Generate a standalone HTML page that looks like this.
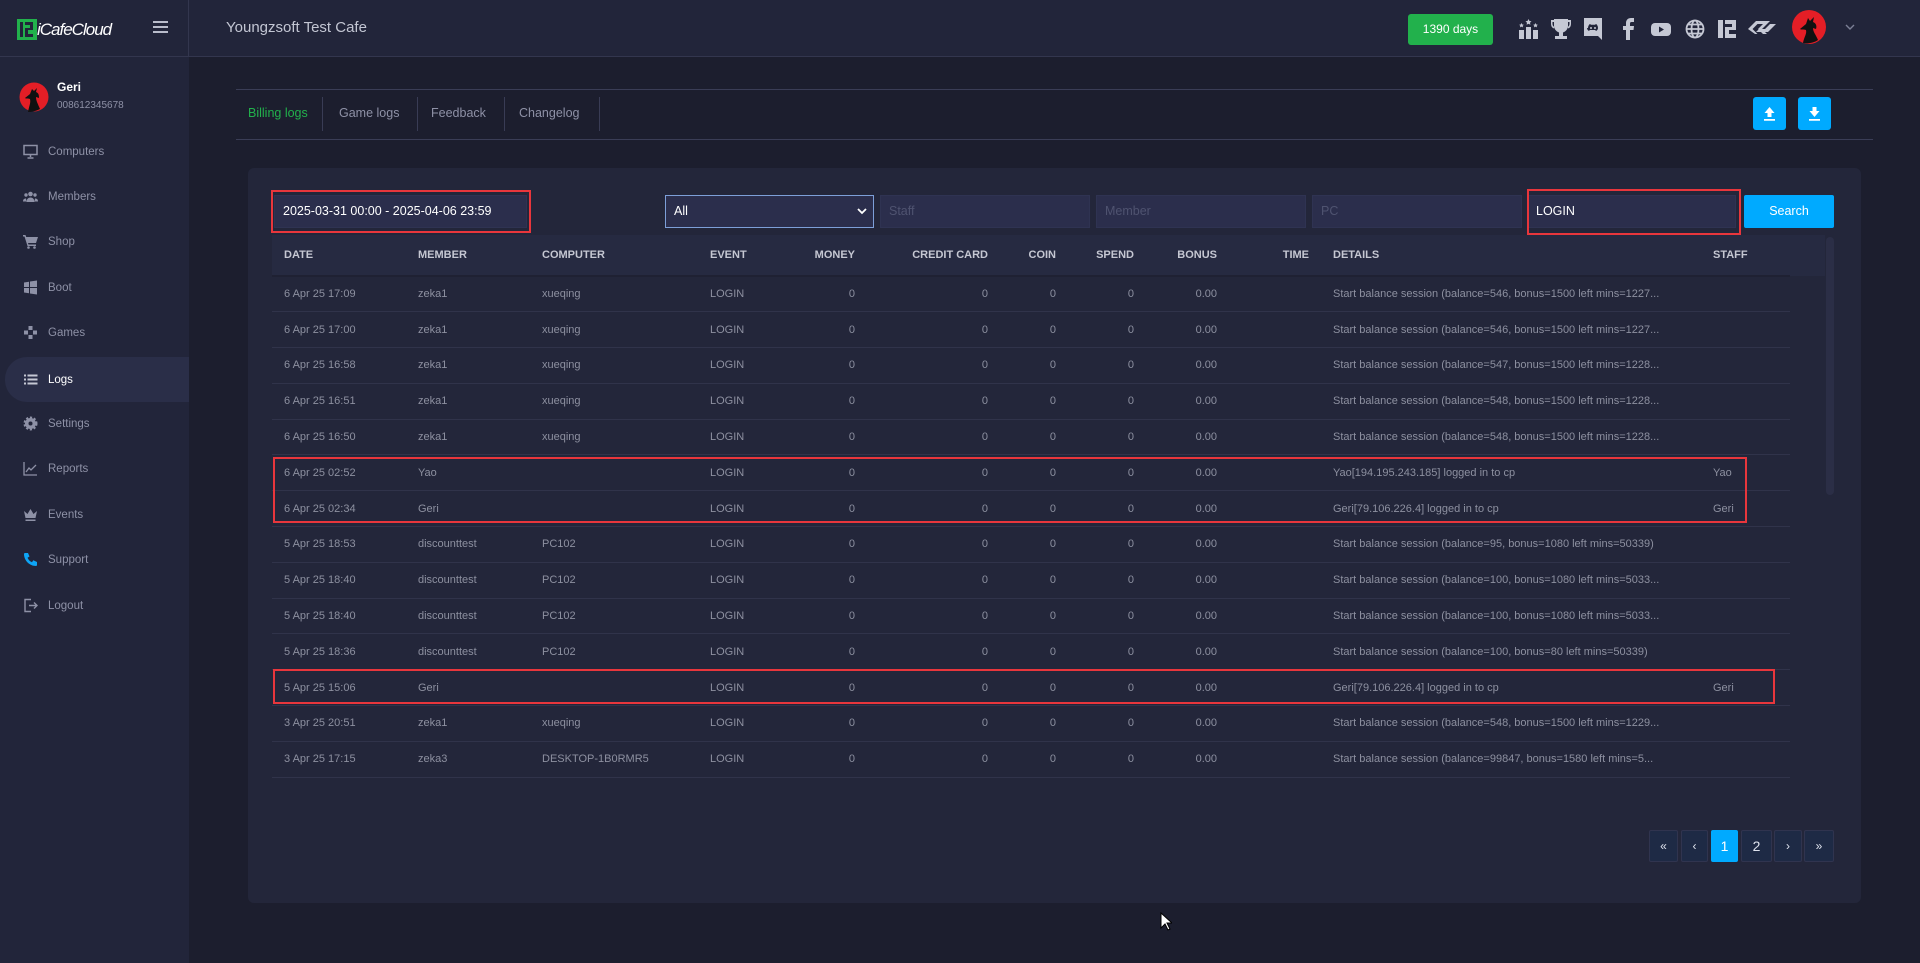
<!DOCTYPE html>
<html><head><meta charset="utf-8"><style>
*{box-sizing:border-box;margin:0;padding:0}
body{width:1920px;height:963px;background:#1c1e2e;font-family:"Liberation Sans",sans-serif;position:relative;overflow:hidden;color:#8d90a0}
.abs{position:absolute}
#hdr{left:0;top:0;width:1920px;height:57px;background:#22253a;border-bottom:1px solid #33364e}
#side{left:0;top:57px;width:189px;height:906px;background:#22253a}
.nav{position:absolute;left:0;width:189px;height:45px;display:flex;align-items:center;font-size:11.5px;color:#8e91a6}
.nav svg{position:absolute;left:23px}
.nav span{position:absolute;left:48px}
.tab{position:absolute;top:106px;font-size:12.5px;color:#8e91a6}
.sep{position:absolute;top:97px;width:1px;height:34px;background:#393c55}
.inp{position:absolute;top:195px;height:33px;background:#2b2e4c;border:1px solid #2f3352;font-size:12.5px;color:#4f5370;padding:0 8px;line-height:31px}
table{position:absolute;left:272px;top:235px;width:1518px;border-collapse:collapse;table-layout:fixed;font-size:11px}
th{height:41px;text-align:left;font-size:11px;color:#c5c7d2;font-weight:bold;padding:0 12px;border-bottom:2px solid #1f2133}
td{height:35.8px;padding:0 12px;color:#8d90a0;border-bottom:1px solid #30334a;white-space:nowrap;overflow:hidden;text-overflow:ellipsis}
.r{text-align:right}
.red{position:absolute;border:2px solid #e8363c}
.pg{position:absolute;top:830px;height:32px;background:#1e2a45;border:1px solid #30344f;border-radius:2px;color:#dfe3ee;font-size:12px;display:flex;align-items:center;justify-content:center}
.ic{position:absolute;top:17px}
</style></head><body>
<div id="hdr" class="abs"></div>
<div class="abs" style="left:188px;top:0;width:1px;height:57px;background:#33364e"></div>
<svg class="abs" style="left:17px;top:19px" width="20" height="21" viewBox="0 0 20 21"><rect width="20" height="21" fill="#22b14c"/><rect x="3" y="3" width="3" height="15" fill="#22253a"/><path d="M8 3h8v8h-5v4h5v3h-8v-9h5v-3h-5z" fill="#22253a"/></svg>
<div class="abs" style="left:37px;top:20px;font-size:17px;color:#fff;letter-spacing:-1px;font-style:italic">iCafeCloud</div>
<div class="abs" style="left:153px;top:21px;width:15px;height:2px;background:#b9bccb;box-shadow:0 5px 0 #b9bccb,0 10px 0 #b9bccb"></div>
<div class="abs" style="left:226px;top:19px;font-size:15px;color:#c3c6d3">Youngzsoft Test Cafe</div>
<div class="abs" style="left:1408px;top:14px;width:85px;height:31px;background:#22b14c;border-radius:3px;color:#fff;font-size:12px;text-align:center;line-height:31px">1390 days</div>
<svg class="ic" style="left:1517px" width="24" height="24" viewBox="0 0 24 24" fill="#c5c8d4"><rect x="2" y="13" width="5" height="9"/><rect x="9" y="10" width="5" height="12"/><rect x="16" y="13" width="5" height="9"/><path d="M11.5 2l1 2 2 .3-1.5 1.4.4 2-1.9-1-1.9 1 .4-2L8.5 4.3l2-.3zM4.5 6l.8 1.5 1.6.2-1.2 1.1.3 1.6-1.5-.8-1.5.8.3-1.6L2.1 7.7l1.6-.2zM18.5 6l.8 1.5 1.6.2-1.2 1.1.3 1.6-1.5-.8-1.5.8.3-1.6-1.2-1.1 1.6-.2z"/></svg>
<svg class="ic" style="left:1550px" width="22" height="24" viewBox="0 0 22 24" fill="#c5c8d4"><path d="M4 2h14v7a7 7 0 0 1-5 6.5V19h4v3H5v-3h4v-3.5A7 7 0 0 1 4 9zM1 3h3v2H2.5v2c0 1.5 1 2.5 1.8 3l-.6 1.5C2 10.7 1 9 1 7zM21 3h-3v2h1.5v2c0 1.5-1 2.5-1.8 3l.6 1.5C20 10.7 21 9 21 7z"/></svg>
<svg class="ic" style="left:1582px" width="22" height="24" viewBox="0 0 22 24"><path d="M2 1h18v22l-4-4H2z" fill="#c5c8d4"/><path d="M6 11c0-2 1-3.5 2-4l1 .8h4l1-.8c1 .5 2 2 2 4 0 1.5-1 2.5-2 3l-.8-1h-5.4l-.8 1c-1-.5-2-1.5-2-3z" fill="#22253a"/><circle cx="9" cy="11" r="1" fill="#c5c8d4"/><circle cx="13" cy="11" r="1" fill="#c5c8d4"/></svg>
<svg class="ic" style="left:1622px" width="14" height="24" viewBox="0 0 14 24" fill="#c5c8d4"><path d="M4 23V13H1V9h3V6c0-3 2-5 5-5h3v4H9.5C8.5 5 8 5.5 8 6.5V9h4l-.5 4H8v10z"/></svg>
<svg class="ic" style="left:1650px" width="22" height="24" viewBox="0 0 22 24"><rect x="1" y="6" width="20" height="13" rx="4" fill="#c5c8d4"/><path d="M9 9.5v6l5-3z" fill="#22253a"/></svg>
<svg class="ic" style="left:1684px" width="22" height="24" viewBox="0 0 22 24" fill="none" stroke="#c5c8d4" stroke-width="1.8"><circle cx="11" cy="12" r="8.5"/><ellipse cx="11" cy="12" rx="3.5" ry="8.5"/><path d="M2.5 12h17M4 7.5h14M4 16.5h14"/></svg>
<svg class="ic" style="left:1716px" width="22" height="24" viewBox="0 0 22 24" fill="#c5c8d4"><path d="M2 3h5v18H2zM9 3h11v10h-7v4h7v4H9v-11h7V7H9z"/></svg>
<svg class="ic" style="left:1747px" width="30" height="24" viewBox="0 0 30 24" fill="#c5c8d4"><path d="M1 12l8-8h14l-3 3H10.5l-5 5 5 5H8zM11 12l5-5h4l-5 5 5 5h-4zM18 12l5-5h6l-8 8H9l3-3z"/></svg>
<svg class="abs" style="left:1791px;top:9px" width="36" height="36" viewBox="0 0 36 36"><circle cx="18" cy="18" r="17" fill="#e41e26"/><path d="M12 34c1-6 4-9 3-13-2-1-5 0-6-1l6-5 2-6 2 3 4-4-1 5c3 1 4 4 3 7l-3-1c0 4 3 7 5 12-4 3-11 4-15 3z" fill="#111"/></svg>
<svg class="abs" style="left:1845px;top:24px" width="10" height="7" viewBox="0 0 10 7"><path d="M1 1l4 4 4-4" stroke="#7c8096" stroke-width="1.4" fill="none"/></svg>

<div id="side" class="abs"></div>
<svg class="abs" style="left:19px;top:79px" width="30" height="35" viewBox="0 0 30 35"><circle cx="15" cy="18" r="14.5" fill="#e41e26"/><path d="M9 33c1-6 3-9 2-13-2-1-4 0-5-1l5-4 2-5 2 2 3-3-1 4c3 1 3 4 3 6l-3-1c0 4 2 7 4 12-4 2-8 3-12 3z" fill="#111"/></svg>
<div class="abs" style="left:57px;top:80px;font-size:12px;color:#fff;font-weight:bold">Geri</div>
<div class="abs" style="left:57px;top:100px;font-size:10px;color:#8e91a6">008612345678</div>
<div class="abs" style="left:5px;top:357px;width:184px;height:45px;background:#2a2e48;border-radius:22px 0 0 22px"></div>
<div class="nav" style="top:129px"><svg width="15" height="15" viewBox="0 0 15 15" fill="none" stroke="#8e91a6" stroke-width="1.5"><rect x="1" y="1.5" width="13" height="9"/><path d="M7.5 11v2M4.5 14h6"/></svg><span>Computers</span></div>
<div class="nav" style="top:174px"><svg width="15" height="15" viewBox="0 0 15 15" fill="#8e91a6"><circle cx="7.5" cy="5" r="2.3"/><circle cx="3" cy="6" r="1.7"/><circle cx="12" cy="6" r="1.7"/><path d="M3.5 13c0-3 2-4.5 4-4.5s4 1.5 4 4.5zM0 12.5c0-2 1-3 3-3l.5 3zM15 12.5c0-2-1-3-3-3l-.5 3z"/></svg><span>Members</span></div>
<div class="nav" style="top:219px"><svg width="15" height="15" viewBox="0 0 15 15" fill="#8e91a6"><path d="M0 1h2.5l.7 2H15l-2 6H5l.5 1.5H13v1.5H4.5L1.5 2.5H0z"/><circle cx="5.5" cy="13.5" r="1.3"/><circle cx="11.5" cy="13.5" r="1.3"/></svg><span>Shop</span></div>
<div class="nav" style="top:265px"><svg width="15" height="15" viewBox="0 0 15 15" fill="#8e91a6"><path d="M1 2.5l5-.8V7H1zM7 1.5l7-1V7H7zM1 8h5v5.3l-5-.8zM7 8h7v6.5l-7-1z"/></svg><span>Boot</span></div>
<div class="nav" style="top:310px"><svg width="15" height="15" viewBox="0 0 15 15" fill="#8e91a6"><rect x="5.5" y="1" width="4" height="4"/><rect x="5.5" y="10" width="4" height="4"/><rect x="1" y="5.5" width="4" height="4"/><rect x="10" y="5.5" width="4" height="4"/></svg><span>Games</span></div>
<div class="nav" style="top:357px;color:#fff"><svg width="15" height="15" viewBox="0 0 15 15" fill="#c5c8d4"><rect x="1" y="2.5" width="2" height="2"/><rect x="4.5" y="2.5" width="10" height="2"/><rect x="1" y="6.5" width="2" height="2"/><rect x="4.5" y="6.5" width="10" height="2"/><rect x="1" y="10.5" width="2" height="2"/><rect x="4.5" y="10.5" width="10" height="2"/></svg><span>Logs</span></div>
<div class="nav" style="top:401px"><svg width="15" height="15" viewBox="0 0 15 15"><circle cx="7.5" cy="7.5" r="5.5" fill="#8e91a6" stroke="#8e91a6" stroke-width="3" stroke-dasharray="2 1.6"/><circle cx="7.5" cy="7.5" r="2" fill="#22253a"/></svg><span>Settings</span></div>
<div class="nav" style="top:446px"><svg width="15" height="15" viewBox="0 0 15 15" fill="none" stroke="#8e91a6" stroke-width="1.3"><path d="M1 1v13h13M3 11l3-4 2 2 5-5"/></svg><span>Reports</span></div>
<div class="nav" style="top:492px"><svg width="15" height="15" viewBox="0 0 15 15" fill="#8e91a6"><path d="M1 4l3.5 3L7.5 2l3 5L14 4l-1.5 7h-10zM2.5 12.5h10V14h-10z"/></svg><span>Events</span></div>
<div class="nav" style="top:537px"><svg width="15" height="15" viewBox="0 0 15 15" fill="#0ea5f5"><path d="M2 1h3l1.5 3.5-2 1.3c.8 2 2.5 3.7 4.5 4.5l1.3-2L14 10v3c0 .6-.5 1-1 1C6.5 14 1 8.5 1 2c0-.5.4-1 1-1z"/></svg><span>Support</span></div>
<div class="nav" style="top:583px"><svg width="15" height="15" viewBox="0 0 15 15" fill="none" stroke="#8e91a6" stroke-width="1.4"><path d="M8 1.5H2v12h6M6 7.5h8M11 4.5l3 3-3 3"/></svg><span>Logout</span></div>

<div class="abs" style="left:236px;top:89px;width:1637px;height:1px;background:#3a3d56"></div>
<div class="abs" style="left:236px;top:139px;width:1637px;height:1px;background:#3a3d56"></div>
<div class="tab" style="left:248px;color:#22b14c">Billing logs</div>
<div class="sep" style="left:322px"></div>
<div class="tab" style="left:339px">Game logs</div>
<div class="sep" style="left:417px"></div>
<div class="tab" style="left:431px">Feedback</div>
<div class="sep" style="left:504px"></div>
<div class="tab" style="left:519px">Changelog</div>
<div class="sep" style="left:599px"></div>
<div class="abs" style="left:1753px;top:97px;width:33px;height:33px;background:#00aaff;border-radius:3px"><svg width="33" height="33" viewBox="0 0 33 33" fill="#fff"><path d="M16.5 10l-5 6h3v4h4v-4h3zM11 22h11v1.8H11z"/></svg></div>
<div class="abs" style="left:1798px;top:97px;width:33px;height:33px;background:#00aaff;border-radius:3px"><svg width="33" height="33" viewBox="0 0 33 33" fill="#fff"><path d="M14.5 10h4v4h3l-5 6-5-6h3zM11 22h11v1.8H11z"/></svg></div>

<div class="abs" style="left:248px;top:168px;width:1613px;height:735px;background:#23263a;border-radius:6px"></div>
<div class="inp" style="left:274px;width:253px;color:#fff">2025-03-31 00:00 - 2025-04-06 23:59</div>
<div class="red" style="left:271px;top:190px;width:260px;height:43px"></div>
<div class="inp" style="left:665px;width:209px;border-color:#7d9fd8;color:#fff">All<svg style="position:absolute;right:6px;top:12px" width="10" height="7" viewBox="0 0 10 7"><path d="M1 1l4 4 4-4" stroke="#fff" stroke-width="1.8" fill="none"/></svg></div>
<div class="inp" style="left:880px;width:210px">Staff</div>
<div class="inp" style="left:1096px;width:210px">Member</div>
<div class="inp" style="left:1312px;width:210px">PC</div>
<div class="inp" style="left:1527px;width:209px;color:#fff">LOGIN</div>
<div class="red" style="left:1527px;top:189px;width:214px;height:46px"></div>
<div class="abs" style="left:1744px;top:195px;width:90px;height:33px;background:#00aaff;border-radius:2px;color:#fff;font-size:12.5px;text-align:center;line-height:33px">Search</div>

<div class="abs" style="left:272px;top:235px;width:1553px;height:41px;background:#262a41"></div>
<div class="abs" style="left:1826px;top:237px;width:8px;height:258px;background:#2b2e46;border-radius:4px"></div>
<table>
<colgroup><col style="width:134px"><col style="width:124px"><col style="width:168px"><col style="width:82px"><col style="width:87px"><col style="width:133px"><col style="width:68px"><col style="width:78px"><col style="width:83px"><col style="width:92px"><col style="width:380px"><col style="width:89px"></colgroup>
<tr><th>DATE</th><th>MEMBER</th><th>COMPUTER</th><th>EVENT</th><th class="r">MONEY</th><th class="r">CREDIT CARD</th><th class="r">COIN</th><th class="r">SPEND</th><th class="r">BONUS</th><th class="r">TIME</th><th>DETAILS</th><th>STAFF</th></tr>
<tr><td>6 Apr 25 17:09</td><td>zeka1</td><td>xueqing</td><td>LOGIN</td><td class="r">0</td><td class="r">0</td><td class="r">0</td><td class="r">0</td><td class="r">0.00</td><td></td><td>Start balance session (balance=546, bonus=1500 left mins=1227...</td><td></td></tr>
<tr><td>6 Apr 25 17:00</td><td>zeka1</td><td>xueqing</td><td>LOGIN</td><td class="r">0</td><td class="r">0</td><td class="r">0</td><td class="r">0</td><td class="r">0.00</td><td></td><td>Start balance session (balance=546, bonus=1500 left mins=1227...</td><td></td></tr>
<tr><td>6 Apr 25 16:58</td><td>zeka1</td><td>xueqing</td><td>LOGIN</td><td class="r">0</td><td class="r">0</td><td class="r">0</td><td class="r">0</td><td class="r">0.00</td><td></td><td>Start balance session (balance=547, bonus=1500 left mins=1228...</td><td></td></tr>
<tr><td>6 Apr 25 16:51</td><td>zeka1</td><td>xueqing</td><td>LOGIN</td><td class="r">0</td><td class="r">0</td><td class="r">0</td><td class="r">0</td><td class="r">0.00</td><td></td><td>Start balance session (balance=548, bonus=1500 left mins=1228...</td><td></td></tr>
<tr><td>6 Apr 25 16:50</td><td>zeka1</td><td>xueqing</td><td>LOGIN</td><td class="r">0</td><td class="r">0</td><td class="r">0</td><td class="r">0</td><td class="r">0.00</td><td></td><td>Start balance session (balance=548, bonus=1500 left mins=1228...</td><td></td></tr>
<tr><td>6 Apr 25 02:52</td><td>Yao</td><td></td><td>LOGIN</td><td class="r">0</td><td class="r">0</td><td class="r">0</td><td class="r">0</td><td class="r">0.00</td><td></td><td>Yao[194.195.243.185] logged in to cp</td><td>Yao</td></tr>
<tr><td>6 Apr 25 02:34</td><td>Geri</td><td></td><td>LOGIN</td><td class="r">0</td><td class="r">0</td><td class="r">0</td><td class="r">0</td><td class="r">0.00</td><td></td><td>Geri[79.106.226.4] logged in to cp</td><td>Geri</td></tr>
<tr><td>5 Apr 25 18:53</td><td>discounttest</td><td>PC102</td><td>LOGIN</td><td class="r">0</td><td class="r">0</td><td class="r">0</td><td class="r">0</td><td class="r">0.00</td><td></td><td>Start balance session (balance=95, bonus=1080 left mins=50339)</td><td></td></tr>
<tr><td>5 Apr 25 18:40</td><td>discounttest</td><td>PC102</td><td>LOGIN</td><td class="r">0</td><td class="r">0</td><td class="r">0</td><td class="r">0</td><td class="r">0.00</td><td></td><td>Start balance session (balance=100, bonus=1080 left mins=5033...</td><td></td></tr>
<tr><td>5 Apr 25 18:40</td><td>discounttest</td><td>PC102</td><td>LOGIN</td><td class="r">0</td><td class="r">0</td><td class="r">0</td><td class="r">0</td><td class="r">0.00</td><td></td><td>Start balance session (balance=100, bonus=1080 left mins=5033...</td><td></td></tr>
<tr><td>5 Apr 25 18:36</td><td>discounttest</td><td>PC102</td><td>LOGIN</td><td class="r">0</td><td class="r">0</td><td class="r">0</td><td class="r">0</td><td class="r">0.00</td><td></td><td>Start balance session (balance=100, bonus=80 left mins=50339)</td><td></td></tr>
<tr><td>5 Apr 25 15:06</td><td>Geri</td><td></td><td>LOGIN</td><td class="r">0</td><td class="r">0</td><td class="r">0</td><td class="r">0</td><td class="r">0.00</td><td></td><td>Geri[79.106.226.4] logged in to cp</td><td>Geri</td></tr>
<tr><td>3 Apr 25 20:51</td><td>zeka1</td><td>xueqing</td><td>LOGIN</td><td class="r">0</td><td class="r">0</td><td class="r">0</td><td class="r">0</td><td class="r">0.00</td><td></td><td>Start balance session (balance=548, bonus=1500 left mins=1229...</td><td></td></tr>
<tr><td>3 Apr 25 17:15</td><td>zeka3</td><td>DESKTOP-1B0RMR5</td><td>LOGIN</td><td class="r">0</td><td class="r">0</td><td class="r">0</td><td class="r">0</td><td class="r">0.00</td><td></td><td>Start balance session (balance=99847, bonus=1580 left mins=5...</td><td></td></tr>
</table>
<div class="red" style="left:273px;top:457px;width:1474px;height:66px"></div>
<div class="red" style="left:273px;top:669px;width:1502px;height:35px"></div>

<div class="pg" style="left:1649px;width:29px">«</div>
<div class="pg" style="left:1681px;width:27px">‹</div>
<div class="pg" style="left:1711px;width:27px;background:#00aaff;border-color:#00aaff;color:#fff;font-size:14px">1</div>
<div class="pg" style="left:1741px;width:31px;font-size:14px">2</div>
<div class="pg" style="left:1774px;width:28px">›</div>
<div class="pg" style="left:1804px;width:30px">»</div>
<svg class="abs" style="left:1160px;top:912px" width="12" height="19" viewBox="0 0 12 19"><path d="M1 1v15l4-4 3 6 2-1-3-6h5z" fill="#fff" stroke="#000" stroke-width="1"/></svg>
</body></html>
